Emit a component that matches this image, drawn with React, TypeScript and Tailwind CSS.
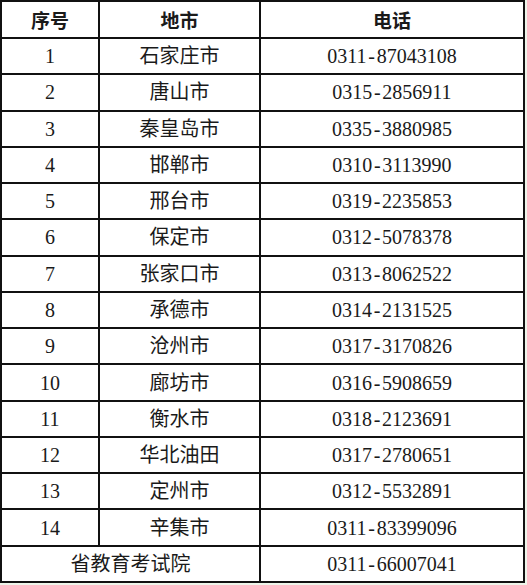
const rows: [string, string, string][] = [
  ["1", "石家庄市", "0311-87043108"],
  ["2", "唐山市", "0315-2856911"],
  ["3", "秦皇岛市", "0335-3880985"],
  ["4", "邯郸市", "0310-3113990"],
  ["5", "邢台市", "0319-2235853"],
  ["6", "保定市", "0312-5078378"],
  ["7", "张家口市", "0313-8062522"],
  ["8", "承德市", "0314-2131525"],
  ["9", "沧州市", "0317-3170826"],
  ["10", "廊坊市", "0316-5908659"],
  ["11", "衡水市", "0318-2123691"],
  ["12", "华北油田", "0317-2780651"],
  ["13", "定州市", "0312-5532891"],
  ["14", "辛集市", "0311-83399096"],
];

function Phone({ value }: { value: string }) {
  const [area, num] = value.split("-");
  return (
    <span>
      {area}
      <span className="inline-block w-[10px] text-center">-</span>
      {num}
    </span>
  );
}

const cell = "flex items-center justify-center bg-white";

export default function App() {
  return (
    <div
      className="w-[527px] h-[585px] bg-[#eef5ea] text-[20px] text-[#1a1a1a] leading-none"
      style={{ fontFamily: '"Liberation Serif", "Noto Sans CJK SC", serif' }}
    >
      <div className="grid w-[525px] h-[583px] grid-cols-[96px_159px_262px] grid-rows-[35px_repeat(15,1fr)] gap-[2px] bg-[#111] p-[2px]">
        {/* header */}
        <div className={`${cell} font-bold text-[19px]`} style={{ fontFamily: '"Noto Sans CJK SC", sans-serif' }}>序号</div>
        <div className={`${cell} font-bold text-[19px]`} style={{ fontFamily: '"Noto Sans CJK SC", sans-serif' }}>地市</div>
        <div className={`${cell} font-bold text-[19px]`} style={{ fontFamily: '"Noto Sans CJK SC", sans-serif' }}>电话</div>

        {rows.map(([no, city, phone]) => (
          <div key={no} className="contents">
            <div className={cell}>{no}</div>
            <div className={cell}>{city}</div>
            <div className={cell}>
              <Phone value={phone} />
            </div>
          </div>
        ))}

        {/* last row, merged */}
        <div className={`${cell} col-span-2`}>省教育考试院</div>
        <div className={cell}>
          <Phone value="0311-66007041" />
        </div>
      </div>
    </div>
  );
}
